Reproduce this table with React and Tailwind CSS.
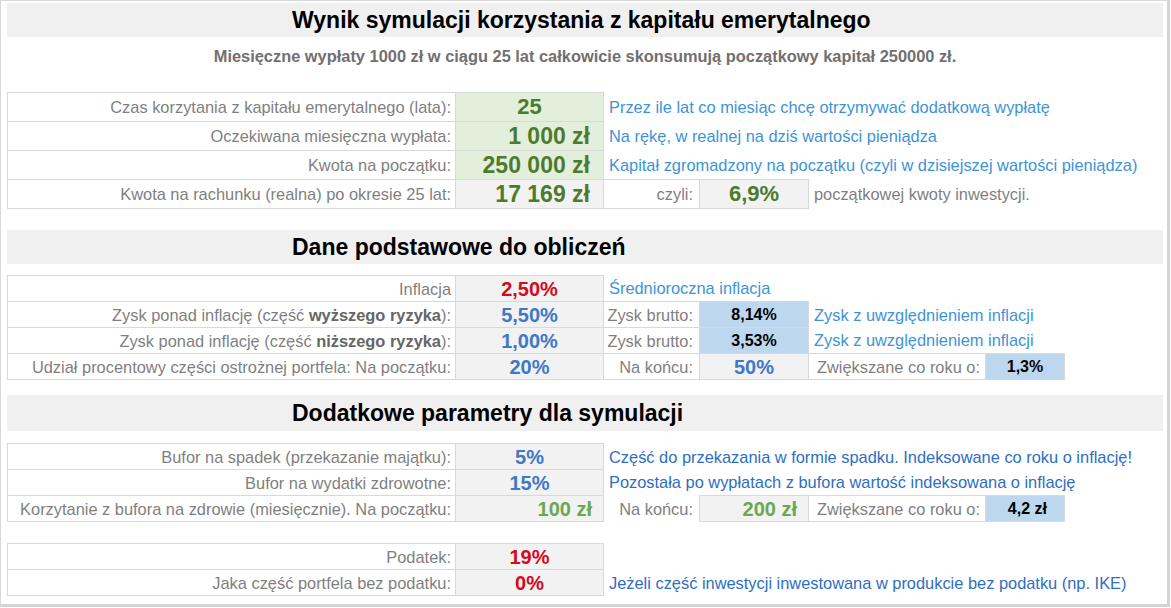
import React from "react";

const F = { fontFamily: '"Liberation Sans", Arial, sans-serif' };

function Cols() {
  return (
    <colgroup>
      <col className="w-[448px]" />
      <col className="w-[148px]" />
      <col className="w-[96px]" />
      <col className="w-[109px]" />
      <col className="w-[177px]" />
      <col className="w-[79px]" />
      <col />
    </colgroup>
  );
}

const B = "border border-[#d9d9d9]";
const Lbl = ({ children }) => (
  <td className={`${B} text-right pr-[4px] text-[16.4px] text-[#7f7f7f] whitespace-nowrap`}>{children}</td>
);
const Desc = ({ children, span = 5, dark }) => (
  <td colSpan={span} className={`pl-[5px] text-[16.4px] whitespace-nowrap ${dark ? "text-[#2e6ec2]" : "text-[#3d94d6]"}`}>
    {children}
  </td>
);
const Sub = ({ children, border = true }) => (
  <td className={`${border ? B : ""} text-right pr-[6px] text-[16.4px] text-[#7f7f7f] whitespace-nowrap`}>{children}</td>
);

function Header({ children, h = "h-[34px]" }) {
  return (
    <div className={`${h} bg-[#f0f0f0] flex items-center pl-[285px] text-[23px] font-bold text-black`}>
      {children}
    </div>
  );
}

const T = "w-[1156px] table-fixed border-collapse leading-[20px]";

export default function App() {
  return (
    <div style={F} className="w-[1170px] h-[607px] overflow-hidden bg-white border-l border-t border-[#d9d9d9] border-r-[3px] border-b-[3px] border-r-[#d4d4d4] border-b-[#d4d4d4] pt-[2px] pl-[6px] pr-[4px]">
      <Header>Wynik symulacji korzystania z kapitału emerytalnego</Header>
      <div className="h-[55px] pt-[9px] leading-[20px] text-center text-[16.4px] font-bold text-[#707070]">
        Miesięczne wypłaty 1000 zł w ciągu 25 lat całkowicie skonsumują początkowy kapitał 250000 zł.
      </div>

      <table className={T}>
        <Cols />
        <tbody>
          <tr className="h-[29px]">
            <Lbl>Czas korzytania z kapitału emerytalnego (lata):</Lbl>
            <td className={`${B} bg-[#e2efda] text-center text-[22px] font-bold text-[#4e7a2e]`}>25</td>
            <Desc>Przez ile lat co miesiąc chcę otrzymywać dodatkową wypłatę</Desc>
          </tr>
          <tr className="h-[29px]">
            <Lbl>Oczekiwana miesięczna wypłata:</Lbl>
            <td className={`${B} bg-[#e2efda] text-right pr-[13px] text-[23px] font-bold text-[#4e7a2e]`}>1 000 zł</td>
            <Desc>Na rękę, w realnej na dziś wartości pieniądza</Desc>
          </tr>
          <tr className="h-[29px]">
            <Lbl>Kwota na początku:</Lbl>
            <td className={`${B} bg-[#e2efda] text-right pr-[13px] text-[23px] font-bold text-[#4e7a2e]`}>250 000 zł</td>
            <Desc>Kapitał zgromadzony na początku (czyli w dzisiejszej wartości pieniądza)</Desc>
          </tr>
          <tr className="h-[29px]">
            <Lbl>Kwota na rachunku (realna) po okresie 25 lat:</Lbl>
            <td className={`${B} bg-[#f2f2f2] text-right pr-[13px] text-[23px] font-bold text-[#4e7a2e]`}>17 169 zł</td>
            <Sub>czyli:</Sub>
            <td className={`${B} bg-[#f2f2f2] text-center text-[22px] font-bold text-[#4e7a2e]`}>6,9%</td>
            <td colSpan={3} className="pl-[5px] text-[16.4px] text-[#7f7f7f] whitespace-nowrap">początkowej kwoty inwestycji.</td>
          </tr>
        </tbody>
      </table>

      <div className="mt-[21px]">
        <Header>Dane podstawowe do obliczeń</Header>
      </div>

      <table className={`mt-[11px] ${T}`}>
        <Cols />
        <tbody>
          <tr className="h-[26px]">
            <Lbl>Inflacja</Lbl>
            <td className={`${B} bg-[#f2f2f2] text-center text-[20px] font-bold text-[#d40a1e]`}>2,50%</td>
            <Desc>Średnioroczna inflacja</Desc>
          </tr>
          <tr className="h-[26px]">
            <Lbl>
              Zysk ponad inflację (część <b className="text-[#666666]">wyższego ryzyka</b>):
            </Lbl>
            <td className={`${B} bg-[#f2f2f2] text-center text-[20px] font-bold text-[#3f78c6]`}>5,50%</td>
            <Sub>Zysk brutto:</Sub>
            <td className={`${B} bg-[#bdd7ee] text-center text-[16px] font-bold text-black`}>8,14%</td>
            <Desc span={3}>Zysk z uwzględnieniem inflacji</Desc>
          </tr>
          <tr className="h-[26px]">
            <Lbl>
              Zysk ponad inflację (część <b className="text-[#666666]">niższego ryzyka</b>):
            </Lbl>
            <td className={`${B} bg-[#f2f2f2] text-center text-[20px] font-bold text-[#3f78c6]`}>1,00%</td>
            <Sub>Zysk brutto:</Sub>
            <td className={`${B} bg-[#bdd7ee] text-center text-[16px] font-bold text-black`}>3,53%</td>
            <Desc span={3}>Zysk z uwzględnieniem inflacji</Desc>
          </tr>
          <tr className="h-[26px]">
            <Lbl>Udział procentowy części ostrożnej portfela: Na początku:</Lbl>
            <td className={`${B} bg-[#f2f2f2] text-center text-[20px] font-bold text-[#3f78c6]`}>20%</td>
            <Sub>Na końcu:</Sub>
            <td className={`${B} bg-[#f2f2f2] text-center text-[20px] font-bold text-[#3f78c6]`}>50%</td>
            <td className={`${B} text-right pr-[5px] text-[16.4px] text-[#7f7f7f] whitespace-nowrap`}>Zwiększane co roku o:</td>
            <td className={`${B} bg-[#bdd7ee] text-center text-[16px] font-bold text-black`}>1,3%</td>
            <td />
          </tr>
        </tbody>
      </table>

      <div className="mt-[15px]">
        <Header h="h-[36px]">Dodatkowe parametry dla symulacji</Header>
      </div>

      <table className={`mt-[12px] ${T}`}>
        <Cols />
        <tbody>
          <tr className="h-[26px]">
            <Lbl>Bufor na spadek (przekazanie majątku):</Lbl>
            <td className={`${B} bg-[#f2f2f2] text-center text-[20px] font-bold text-[#3f78c6]`}>5%</td>
            <Desc dark>Część do przekazania w formie spadku. Indeksowane co roku o inflację!</Desc>
          </tr>
          <tr className="h-[26px]">
            <Lbl>Bufor na wydatki zdrowotne:</Lbl>
            <td className={`${B} bg-[#f2f2f2] text-center text-[20px] font-bold text-[#3f78c6]`}>15%</td>
            <Desc dark>Pozostała po wypłatach z bufora wartość indeksowana o inflację</Desc>
          </tr>
          <tr className="h-[26px]">
            <Lbl>Korzytanie z bufora na zdrowie (miesięcznie). Na początku:</Lbl>
            <td className={`${B} bg-[#f2f2f2] text-right pr-[11px] text-[20px] font-bold text-[#6aa84f]`}>100 zł</td>
            <Sub border={false}>Na końcu:</Sub>
            <td className={`${B} bg-[#f2f2f2] text-right pr-[11px] text-[20px] font-bold text-[#6aa84f]`}>200 zł</td>
            <td className={`${B} text-right pr-[5px] text-[16.4px] text-[#7f7f7f] whitespace-nowrap`}>Zwiększane co roku o:</td>
            <td className={`${B} bg-[#bdd7ee] text-right pr-[17px] text-[16px] font-bold text-black`}>4,2 zł</td>
            <td />
          </tr>
        </tbody>
      </table>

      <table className={`mt-[21px] ${T}`}>
        <Cols />
        <tbody>
          <tr className="h-[26px]">
            <Lbl>Podatek:</Lbl>
            <td className={`${B} bg-[#f2f2f2] text-center text-[20px] font-bold text-[#d40a1e]`}>19%</td>
            <td colSpan={5} />
          </tr>
          <tr className="h-[26px]">
            <Lbl>Jaka część portfela bez podatku:</Lbl>
            <td className={`${B} bg-[#f2f2f2] text-center text-[20px] font-bold text-[#d40a1e]`}>0%</td>
            <Desc dark>Jeżeli część inwestycji inwestowana w produkcie bez podatku (np. IKE)</Desc>
          </tr>
        </tbody>
      </table>
    </div>
  );
}
